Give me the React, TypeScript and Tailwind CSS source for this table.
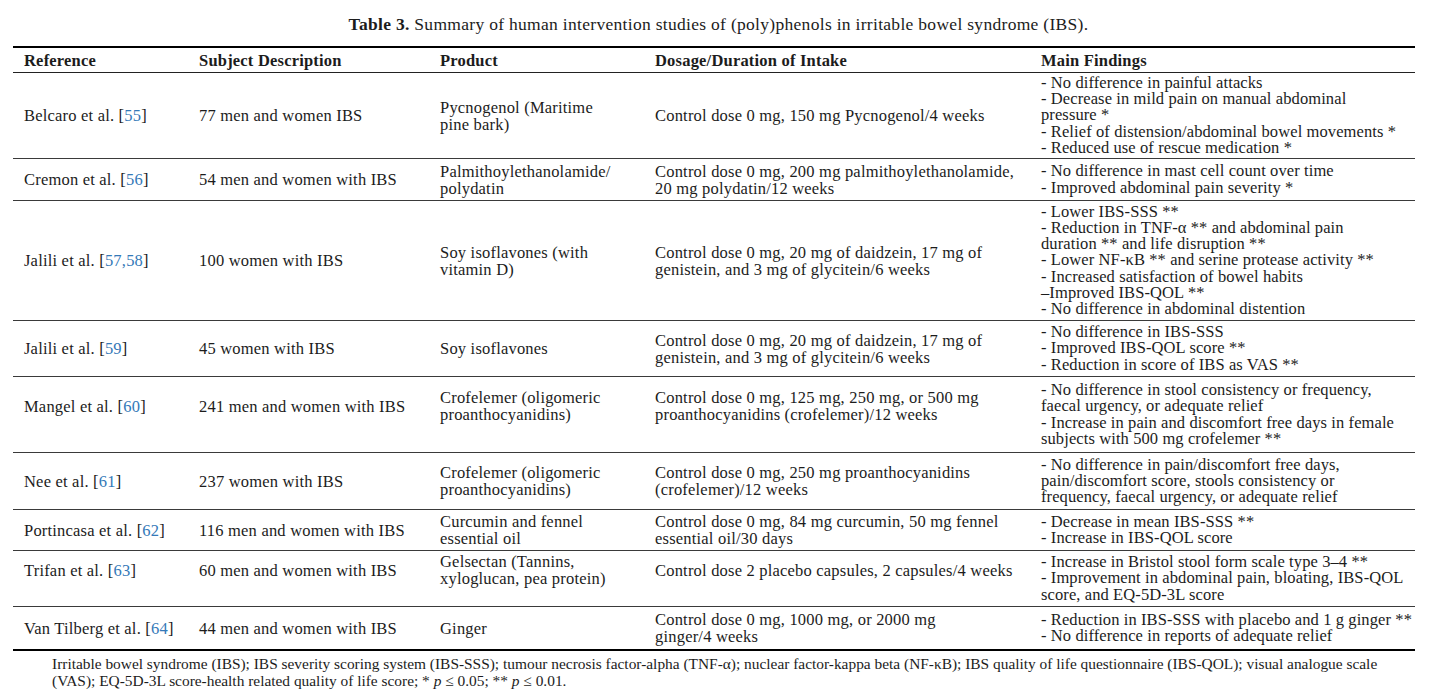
type Row = {
  author: string;
  refs: string;
  subject: string;
  product: string[];
  dosage: string[];
  findings: string[];
  height: string;
  lift?: boolean;
};

const rows: Row[] = [
  {
    author: 'Belcaro et al.',
    refs: '55',
    subject: '77 men and women IBS',
    product: ['Pycnogenol (Maritime', 'pine bark)'],
    dosage: ['Control dose 0 mg, 150 mg Pycnogenol/4 weeks'],
    findings: [
      '- No difference in painful attacks',
      '- Decrease in mild pain on manual abdominal',
      'pressure *',
      '- Relief of distension/abdominal bowel movements *',
      '- Reduced use of rescue medication *',
    ],
    height: 'h-[86px]',
  },
  {
    author: 'Cremon et al.',
    refs: '56',
    subject: '54 men and women with IBS',
    product: ['Palmithoylethanolamide/', 'polydatin'],
    dosage: ['Control dose 0 mg, 200 mg palmithoylethanolamide,', '20 mg polydatin/12 weeks'],
    findings: ['- No difference in mast cell count over time', '- Improved abdominal pain severity *'],
    height: 'h-[42px]',
  },
  {
    author: 'Jalili et al.',
    refs: '57,58',
    subject: '100 women with IBS',
    product: ['Soy isoflavones (with', 'vitamin D)'],
    dosage: ['Control dose 0 mg, 20 mg of daidzein, 17 mg of', 'genistein, and 3 mg of glycitein/6 weeks'],
    findings: [
      '- Lower IBS-SSS **',
      '- Reduction in TNF-α ** and abdominal pain',
      'duration ** and life disruption **',
      '- Lower NF-κB ** and serine protease activity **',
      '- Increased satisfaction of bowel habits',
      '–Improved IBS-QOL **',
      '- No difference in abdominal distention',
    ],
    height: 'h-[120px]',
  },
  {
    author: 'Jalili et al.',
    refs: '59',
    subject: '45 women with IBS',
    product: ['Soy isoflavones'],
    dosage: ['Control dose 0 mg, 20 mg of daidzein, 17 mg of', 'genistein, and 3 mg of glycitein/6 weeks'],
    findings: ['- No difference in IBS-SSS', '- Improved IBS-QOL score **', '- Reduction in score of IBS as VAS **'],
    height: 'h-[56px]',
  },
  {
    author: 'Mangel et al.',
    refs: '60',
    subject: '241 men and women with IBS',
    product: ['Crofelemer (oligomeric', 'proanthocyanidins)'],
    dosage: ['Control dose 0 mg, 125 mg, 250 mg, or 500 mg', 'proanthocyanidins (crofelemer)/12 weeks'],
    findings: [
      '- No difference in stool consistency or frequency,',
      'faecal urgency, or adequate relief',
      '- Increase in pain and discomfort free days in female',
      'subjects with 500 mg crofelemer **',
    ],
    height: 'h-[76px]',
    lift: true,
  },
  {
    author: 'Nee et al.',
    refs: '61',
    subject: '237 women with IBS',
    product: ['Crofelemer (oligomeric', 'proanthocyanidins)'],
    dosage: ['Control dose 0 mg, 250 mg proanthocyanidins', '(crofelemer)/12 weeks'],
    findings: [
      '- No difference in pain/discomfort free days,',
      'pain/discomfort score, stools consistency or',
      'frequency, faecal urgency, or adequate relief',
    ],
    height: 'h-[57px]',
  },
  {
    author: 'Portincasa et al.',
    refs: '62',
    subject: '116 men and women with IBS',
    product: ['Curcumin and fennel', 'essential oil'],
    dosage: ['Control dose 0 mg, 84 mg curcumin, 50 mg fennel', 'essential oil/30 days'],
    findings: ['- Decrease in mean IBS-SSS **', '- Increase in IBS-QOL score'],
    height: 'h-[41px]',
  },
  {
    author: 'Trifan et al.',
    refs: '63',
    subject: '60 men and women with IBS',
    product: ['Gelsectan (Tannins,', 'xyloglucan, pea protein)'],
    dosage: ['Control dose 2 placebo capsules, 2 capsules/4 weeks'],
    findings: [
      '- Increase in Bristol stool form scale type 3–4 **',
      '- Improvement in abdominal pain, bloating, IBS-QOL',
      'score, and EQ-5D-3L score',
    ],
    height: 'h-[56px]',
    lift: true,
  },
  {
    author: 'Van Tilberg et al.',
    refs: '64',
    subject: '44 men and women with IBS',
    product: ['Ginger'],
    dosage: ['Control dose 0 mg, 1000 mg, or 2000 mg', 'ginger/4 weeks'],
    findings: ['- Reduction in IBS-SSS with placebo and 1 g ginger **', '- No difference in reports of adequate relief'],
    height: 'h-[42px]',
  },
];

const Lines = ({ lines }: { lines: string[] }) => (
  <div>
    {lines.map((l, i) => (
      <div key={i} className="whitespace-nowrap">
        {l}
      </div>
    ))}
  </div>
);

const App = () => {
  const cell = 'flex items-center pl-[11px] leading-[17px]';

  return (
    <div className="w-[1437px] h-[692px] bg-white text-[#1c1c1c] font-['Liberation_Serif',serif] text-[16.5px] tracking-[0.2px] overflow-hidden">
      <div className="pt-[14px] h-[46px] text-center leading-[20px] text-[17.5px] tracking-[0.3px]">
        <span className="font-bold">Table 3.</span> Summary of human intervention studies of (poly)phenols in
        irritable bowel syndrome (IBS).
      </div>

      <div className="ml-[13px] w-[1402px] border-t-2 border-b-2 border-black">
        {/* header */}
        <div className="grid grid-cols-[175px_241px_215px_386px_385px] h-[25px] border-b border-[#222] font-bold leading-[17px]">
          <div className="flex items-center pl-[11px]">Reference</div>
          <div className="flex items-center pl-[11px]">Subject Description</div>
          <div className="flex items-center pl-[11px]">Product</div>
          <div className="flex items-center pl-[11px]">Dosage/Duration of Intake</div>
          <div className="flex items-center pl-[11px]">Main Findings</div>
        </div>

        {rows.map((r, i) => (
          <div
            key={i}
            className={`grid grid-cols-[175px_241px_215px_386px_385px] ${r.height} ${
              i < rows.length - 1 ? 'border-b border-[#3a3a3a]' : ''
            }`}
          >
            <div className={`${cell} ${r.lift ? 'pb-[17px]' : ''} whitespace-nowrap`}>
              <span>
                {r.author} [<span className="text-[#3479b8]">{r.refs}</span>]
              </span>
            </div>
            <div className={`${cell} ${r.lift ? 'pb-[17px]' : ''} whitespace-nowrap`}>{r.subject}</div>
            <div className={`${cell} ${r.lift ? 'pb-[17px]' : ''}`}>
              <Lines lines={r.product} />
            </div>
            <div className={`${cell} ${r.lift ? 'pb-[17px]' : ''}`}>
              <Lines lines={r.dosage} />
            </div>
            <div className="flex items-center pl-[11px] leading-[16.2px] tracking-[0.1px]">
              <Lines lines={r.findings} />
            </div>
          </div>
        ))}
      </div>

      <div className="pl-[52px] pt-[4px] text-[15.4px] tracking-normal leading-[17px]">
        <div className="whitespace-nowrap">
          Irritable bowel syndrome (IBS); IBS severity scoring system (IBS-SSS); tumour necrosis factor-alpha
          (TNF-α); nuclear factor-kappa beta (NF-κB); IBS quality of life questionnaire (IBS-QOL); visual analogue
          scale
        </div>
        <div className="whitespace-nowrap">
          (VAS); EQ-5D-3L score-health related quality of life score; * <i>p</i> ≤ 0.05; ** <i>p</i> ≤ 0.01.
        </div>
      </div>
    </div>
  );
};

export default App;
